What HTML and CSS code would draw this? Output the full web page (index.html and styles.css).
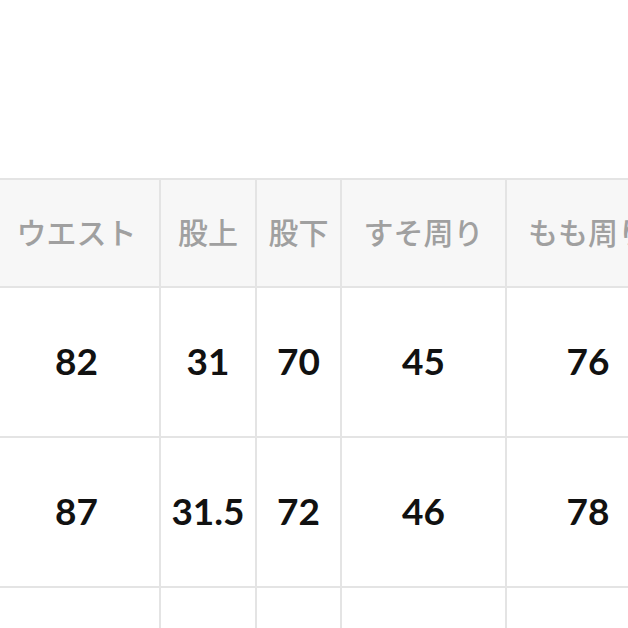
FILE: index.html
```html
<!DOCTYPE html>
<html lang="ja">
<head>
<meta charset="utf-8">
<link rel="stylesheet" href="styles.css">
</head>
<body>
<div class="page">
  <div class="size-table">
    <div class="cell head c1">ウエスト</div>
    <div class="cell head c2">股上</div>
    <div class="cell head c3">股下</div>
    <div class="cell head c4">すそ周り</div>
    <div class="cell head c5">もも周り</div>

    <div class="cell num">82</div>
    <div class="cell num">31</div>
    <div class="cell num">70</div>
    <div class="cell num">45</div>
    <div class="cell num">76</div>

    <div class="cell num">87</div>
    <div class="cell num">31.5</div>
    <div class="cell num">72</div>
    <div class="cell num">46</div>
    <div class="cell num">78</div>

    <div class="cell num"></div>
    <div class="cell num"></div>
    <div class="cell num"></div>
    <div class="cell num"></div>
    <div class="cell num"></div>
  </div>
</div>
</body>
</html>
```
FILE: styles.css
```css
html, body {
  margin: 0;
  padding: 0;
  background: #ffffff;
  overflow: hidden;
}

.page {
  width: 628px;
  height: 628px;
  overflow: hidden;
  padding-top: 178px;
  box-sizing: border-box;
}

.size-table {
  display: grid;
  grid-template-columns: 167px 96px 85px 165px 164px;
  grid-template-rows: 108px 150px 150px 150px;
  margin-left: -6px;
  width: max-content;
  border-top: 2px solid #e4e4e4;
}

.cell {
  box-sizing: border-box;
  border-right: 2px solid #e4e4e4;
  border-bottom: 2px solid #e4e4e4;
  display: flex;
  align-items: center;
  justify-content: center;
  white-space: nowrap;
}

.head {
  background: #f7f7f7;
  color: #a0a0a0;
  font-family: "Noto Sans CJK JP", "Noto Sans", sans-serif;
  font-weight: 500;
  font-size: 30px;
  padding-bottom: 5px;
}

.num {
  background: #ffffff;
  color: #111111;
  font-family: Lato, "Noto Sans", sans-serif;
  font-weight: 700;
  font-size: 37px;
  padding-bottom: 4px;
}
```
